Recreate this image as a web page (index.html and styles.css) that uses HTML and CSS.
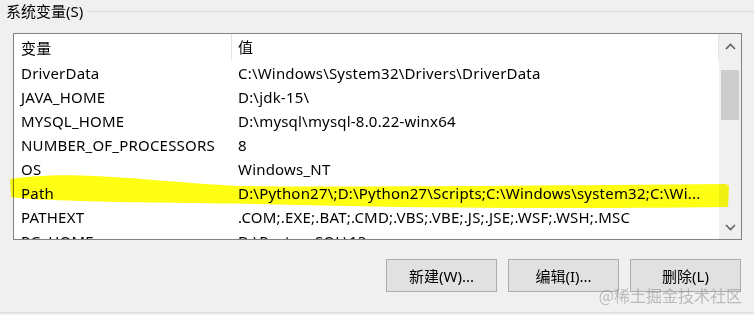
FILE: index.html
```html
<!DOCTYPE html>
<html lang="zh-CN">

<head>
    <meta charset="utf-8">
    <title>系统变量</title>
    <link rel="stylesheet" href="styles.css">
</head>

<body>
    <div class="dialog">
        <div class="group-title">
            <span class="title-text">系统变量(S)</span>
            <span class="title-rule"></span>
        </div>

        <div class="listbox">
            <div class="list">
                <div class="row head">
                    <span class="col-name">变量</span>
                    <span class="col-value">值</span>
                </div>
                <div class="row"><span class="col-name">DriverData</span><span class="col-value">C:\Windows\System32\Drivers\DriverData</span></div>
                <div class="row"><span class="col-name">JAVA_HOME</span><span class="col-value">D:\jdk-15\</span></div>
                <div class="row"><span class="col-name">MYSQL_HOME</span><span class="col-value">D:\mysql\mysql-8.0.22-winx64</span></div>
                <div class="row"><span class="col-name">NUMBER_OF_PROCESSORS</span><span class="col-value">8</span></div>
                <div class="row"><span class="col-name">OS</span><span class="col-value">Windows_NT</span></div>
                <div class="row"><span class="col-name">Path</span><span class="col-value">D:\Python27\;D:\Python27\Scripts;C:\Windows\system32;C:\Wi...</span></div>
                <div class="row"><span class="col-name">PATHEXT</span><span class="col-value">.COM;.EXE;.BAT;.CMD;.VBS;.VBE;.JS;.JSE;.WSF;.WSH;.MSC</span></div>
                <div class="row"><span class="col-name">PG_HOME</span><span class="col-value">D:\PostgreSQL\13</span></div>
            </div>

            <div class="scrollbar">
                <div class="scroll-btn up">
                    <svg width="11" height="7" viewBox="0 0 11 7"><polyline points="1,6 5.5,1.5 10,6" /></svg>
                </div>
                <div class="scroll-thumb"></div>
                <div class="scroll-track"></div>
                <div class="scroll-btn down">
                    <svg width="11" height="7" viewBox="0 0 11 7"><polyline points="1,1 5.5,5.5 10,1" /></svg>
                </div>
            </div>
        </div>

        <div class="buttons">
            <button type="button">新建(W)...</button>
            <button type="button">编辑(I)...</button>
            <button type="button">删除(L)</button>
        </div>

        <div class="footer-rule"></div>

        <!-- yellow marker stroke drawn over the Path row -->
        <svg class="marker" width="754" height="315" viewBox="0 0 754 315">
            <path d="M10,179 C30,176 60,174 95,176 C140,178 180,183 240,186 C330,187 500,186 726,184 L729,186 L728,207 C560,209 420,208 300,205 C220,203 140,203 80,201 C50,200 25,199 11,197 Z" />
        </svg>

        <div class="watermark">@稀土掘金技术社区</div>
    </div>
</body>

</html>
```

FILE: styles.css
```css
body {
    margin: 0;
    background-color: #f0f0f0;
    font-family: 'Noto Sans', 'Noto Sans CJK SC', sans-serif;
    font-size: 15px;
    color: #000;
    overflow: hidden;
}

.dialog {
    position: relative;
    width: 754px;
    height: 315px;
}

.group-title {
    display: flex;
    align-items: center;
    height: 22px;
    padding-left: 6px;
    gap: 4px;
}

.title-text {
    line-height: 22px;
}

.title-rule {
    flex: 1;
    height: 1px;
    background-color: #dcdcdc;
}

.listbox {
    display: flex;
    width: 727px;
    height: 205px;
    margin: 11px 0 0 13px;
    border: 1px solid #828282;
    background-color: #fff;
}

.list {
    flex: 1;
    overflow: hidden;
    letter-spacing: 0.2px;
}

.row {
    display: flex;
    align-items: center;
    height: 24px;
    white-space: nowrap;
}

.row.head {
    height: 27px;
}

.col-name {
    width: 210px;
    padding-left: 7px;
    flex-shrink: 0;
}

.col-value {
    padding-left: 7px;
}

.head .col-value {
    flex: 1;
    height: 27px;
    line-height: 27px;
    border-left: 1px solid #e5e5e5;
    border-right: 1px solid #e5e5e5;
    padding-left: 6px;
}

.scrollbar {
    width: 22px;
    display: flex;
    flex-direction: column;
    background-color: #f0f0f0;
}

.scroll-btn {
    display: flex;
    align-items: center;
    justify-content: center;
}

.scroll-btn.up {
    height: 36px;
    padding-bottom: 12px;
    box-sizing: border-box;
}

.scroll-btn.down {
    height: 24px;
}

.scroll-btn polyline {
    fill: none;
    stroke: #606060;
    stroke-width: 1.6;
}

.scroll-thumb {
    height: 50px;
    margin: 0 2px;
    background-color: #cdcdcd;
}

.scroll-track {
    flex: 1;
}

.buttons {
    display: flex;
    justify-content: flex-end;
    gap: 11px;
    margin-top: 19px;
    padding-right: 13px;
}

button {
    width: 111px;
    height: 33px;
    border: 1px solid #adadad;
    background-color: #e1e1e1;
    font-family: 'Noto Sans', 'Noto Sans CJK SC', sans-serif;
    font-size: 15px;
    color: #000;
    padding: 0;
}

.footer-rule {
    height: 1px;
    margin-top: 20px;
    background-color: #dcdcdc;
}

.marker {
    position: absolute;
    left: 0;
    top: 0;
    pointer-events: none;
}

.marker path {
    fill: #ffff14;
    mix-blend-mode: multiply;
}

.watermark {
    position: absolute;
    right: 12px;
    top: 283px;
    font-family: 'Noto Sans CJK SC', sans-serif;
    font-size: 16px;
    color: rgba(150, 150, 150, 0.6);
}
```
